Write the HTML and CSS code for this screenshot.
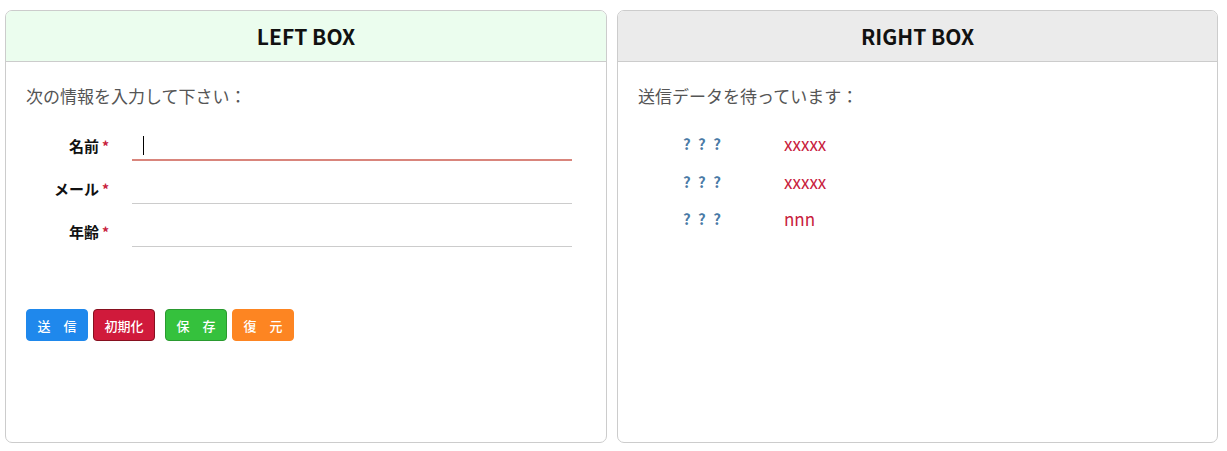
FILE: index.html
```html
<!DOCTYPE html>
<html lang="ja">
<head>
<meta charset="utf-8">
<title>Boxes</title>
<link rel="stylesheet" href="styles.css">
</head>
<body>
<div class="page">
  <section class="box box-left">
    <header class="box-head">LEFT BOX</header>
    <div class="box-body">
      <p class="intro">次の情報を入力して下さい：</p>
      <form class="form">
        <div class="row">
          <label class="label">名前<span class="req">*</span></label>
          <div class="field"><input class="input input-active" type="text"><span class="caret"></span></div>
        </div>
        <div class="row">
          <label class="label">メール<span class="req">*</span></label>
          <div class="field"><input class="input" type="text"></div>
        </div>
        <div class="row">
          <label class="label">年齢<span class="req">*</span></label>
          <div class="field"><input class="input" type="text"></div>
        </div>
      </form>
      <div class="buttons">
        <div class="btn-group">
          <button class="btn btn-blue" type="button">送　信</button>
          <button class="btn btn-red" type="button">初期化</button>
        </div>
        <div class="btn-group">
          <button class="btn btn-green" type="button">保　存</button>
          <button class="btn btn-orange" type="button">復　元</button>
        </div>
      </div>
    </div>
  </section>
  <section class="box box-right">
    <header class="box-head">RIGHT BOX</header>
    <div class="box-body">
      <p class="intro">送信データを待っています：</p>
      <div class="data">
        <div class="data-row"><span class="key">? ? ?</span><span class="val">xxxxx</span></div>
        <div class="data-row"><span class="key">? ? ?</span><span class="val">xxxxx</span></div>
        <div class="data-row"><span class="key">? ? ?</span><span class="val">nnn</span></div>
      </div>
    </div>
  </section>
</div>
</body>
</html>
```

FILE: styles.css
```css
* { box-sizing: border-box; }
html, body { margin: 0; padding: 0; background: #fff; }
body {
  font-family: "Noto Sans CJK JP", "Noto Sans", sans-serif;
  color: #333;
}
.page {
  display: flex;
  gap: 10px;
  padding: 10px 9px 0 5px;
}
.box {
  width: 602px;
  height: 433px;
  border: 1px solid #cccccc;
  border-radius: 7px;
  overflow: hidden;
  background: #fff;
}
.box-right { width: 601px; }
.box-head {
  height: 51px;
  border-bottom: 1px solid #cccccc;
  display: flex;
  align-items: center;
  justify-content: center;
  font-size: 21px;
  font-weight: 700;
  color: #111;
}
.box-left .box-head { background: #ebfdee; }
.box-right .box-head { background: #ebebeb; }
.box-body {
  padding: 21px 20px 0 20px;
}
.intro {
  margin: 0;
  font-size: 17px;
  line-height: 26px;
  color: #555;
}
.form {
  margin-top: 20px;
  width: 546px;
  display: flex;
  flex-direction: column;
  gap: 11px;
}
.row {
  display: flex;
  align-items: center;
}
.label {
  width: 83px;
  text-align: right;
  font-size: 15px;
  font-weight: 700;
  color: #111;
  padding-top: 1px;
}
.req {
  color: #c8203c;
  margin-left: 3px;
  font-size: 14px;
}
.field {
  position: relative;
  margin-left: 23px;
  flex: 1;
}
.input {
  display: block;
  width: 100%;
  height: 32px;
  border: none;
  border-bottom: 1px solid #cccccc;
  outline: none;
  padding: 0 10px;
  font: inherit;
  background: transparent;
}
.input-active {
  border-bottom: 2px solid #d9857c;
}
.caret {
  position: absolute;
  left: 11px;
  top: 7px;
  width: 1px;
  height: 19px;
  background: #000;
}
.buttons {
  margin-top: 62px;
  display: flex;
  gap: 10px;
}
.btn-group {
  display: flex;
  gap: 5px;
}
.btn {
  width: 62px;
  height: 32px;
  border-radius: 4px;
  border: 1px solid transparent;
  color: #fff;
  font-family: "Noto Sans CJK JP", "Noto Sans", sans-serif;
  font-size: 13px;
  font-weight: 500;
  padding: 0;
  display: flex;
  align-items: center;
  justify-content: center;
}
.btn-blue { background: #1f88ec; border-color: #1f88ec; }
.btn-red { background: #d01a3b; border-color: #86101f; }
.btn-green { background: #35c13d; border-color: #2a9a30; }
.btn-orange { background: #fd8522; border-color: #fd8522; }
.data {
  margin-top: 16px;
  padding-left: 45px;
  display: flex;
  flex-direction: column;
}
.data-row {
  display: flex;
  align-items: center;
  height: 37.5px;
}
.key {
  width: 101px;
  font-size: 15px;
  font-weight: 700;
  color: #4a7aa6;
  letter-spacing: 2px;
}
.val {
  font-size: 17px;
  color: #c8203c;
}
```
